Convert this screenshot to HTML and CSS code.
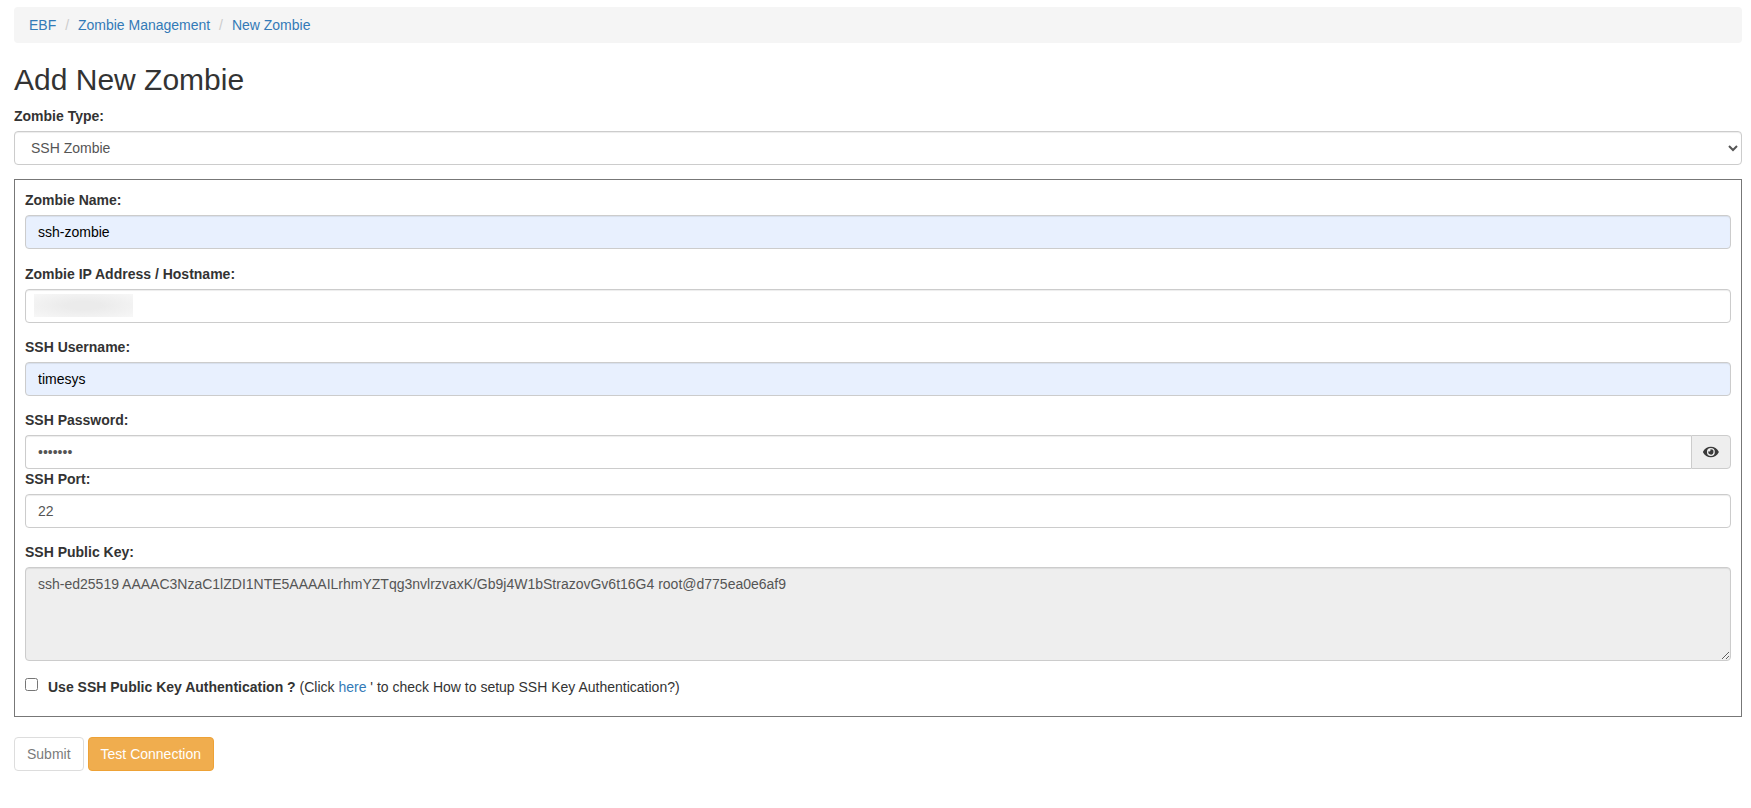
FILE: index.html
```html
<!DOCTYPE html>
<html lang="en">
<head>
<meta charset="utf-8">
<title>Add New Zombie</title>
<link rel="stylesheet" href="styles.css">
</head>
<body>
<div class="page">
  <ol class="breadcrumb">
    <li><a href="#">EBF</a></li>
    <li><a href="#">Zombie Management</a></li>
    <li><a href="#">New Zombie</a></li>
  </ol>
  <h2 class="title">Add New Zombie</h2>
  <form>
    <div class="form-group">
      <label class="field-label">Zombie Type:</label>
      <select class="form-control"><option>SSH Zombie</option></select>
    </div>
    <div class="box">
      <div class="form-group">
        <label class="field-label">Zombie Name:</label>
        <input class="form-control autofilled" type="text" value="ssh-zombie">
      </div>
      <div class="form-group">
        <label class="field-label">Zombie IP Address / Hostname:</label>
        <div class="masked-wrap">
          <input class="form-control" type="text" value="">
          <div class="mask"></div>
        </div>
      </div>
      <div class="form-group">
        <label class="field-label">SSH Username:</label>
        <input class="form-control autofilled" type="text" value="timesys">
      </div>
      <div class="form-group-tight">
        <label class="field-label">SSH Password:</label>
        <div class="input-group">
          <input class="form-control group-input" type="password" value="1234567">
          <span class="addon">
            <svg class="eye" viewBox="0 0 576 512" aria-hidden="true"><path d="M572.52 241.4C518.29 135.59 410.93 64 288 64S57.68 135.64 3.48 241.41a32.35 32.35 0 0 0 0 29.19C57.71 376.41 165.07 448 288 448s230.32-71.64 284.52-177.41a32.35 32.35 0 0 0 0-29.19zM288 400a144 144 0 1 1 144-144 143.93 143.93 0 0 1-144 144zm0-240a95.31 95.31 0 0 0-25.31 3.79 47.85 47.85 0 0 1-66.9 66.9A95.78 95.78 0 1 0 288 160z"/></svg>
          </span>
        </div>
      </div>
      <div class="form-group">
        <label class="field-label">SSH Port:</label>
        <input class="form-control" type="text" value="22">
      </div>
      <div class="form-group">
        <label class="field-label">SSH Public Key:</label>
        <textarea class="form-control key-area" readonly>ssh-ed25519 AAAAC3NzaC1lZDI1NTE5AAAAILrhmYZTqg3nvlrzvaxK/Gb9j4W1bStrazovGv6t16G4 root@d775ea0e6af9</textarea>
      </div>
      <div class="check-row">
        <input class="check" type="checkbox">
        <span><strong class="check-title">Use SSH Public Key Authentication ?</strong> (Click <a href="#">here</a> ' to check How to setup SSH Key Authentication?)</span>
      </div>
    </div>
    <div class="actions">
      <button class="btn btn-default" type="button" disabled>Submit</button>
      <button class="btn btn-warning" type="button">Test Connection</button>
    </div>
  </form>
</div>
</body>
</html>
```
FILE: styles.css
```css
* { box-sizing: border-box; }
html, body { margin: 0; padding: 0; background: #fff; }
body {
  font-family: "Liberation Sans", Arial, sans-serif;
  font-size: 14px;
  line-height: 20px;
  color: #333;
}
a { color: #337ab7; text-decoration: none; }
.page { padding: 7px 9px 0 14px; }
.breadcrumb {
  list-style: none;
  margin: 0 0 20px;
  padding: 8px 15px;
  background: #f5f5f5;
  border-radius: 4px;
}
.breadcrumb li { display: inline-block; }
.breadcrumb li + li::before {
  content: "/\00a0";
  padding: 0 5px;
  color: #ccc;
}
.title {
  margin: 0 0 10px;
  font-size: 30px;
  font-weight: 500;
  line-height: 33px;
}
.form-group { margin-bottom: 14.33px; }
.form-group-tight { margin-bottom: -0.67px; }
.field-label {
  display: block;
  margin-bottom: 5px;
  font-weight: 700;
  line-height: 20px;
}
.form-control {
  display: block;
  width: 100%;
  height: 34px;
  padding: 6px 12px;
  font-family: inherit;
  font-size: 14px;
  line-height: 20px;
  color: #555;
  background: #fff;
  border: 1px solid #ccc;
  border-radius: 4px;
  box-shadow: inset 0 1px 1px rgba(0,0,0,.075);
}
.autofilled { background: #e8f0fe; color: #000; }
.box {
  border: 1px solid #777;
  padding: 10px 10px 0;
  height: 537.5px;
}
.masked-wrap { position: relative; }
.mask {
  position: absolute;
  left: 9px;
  top: 5.5px;
  width: 99px;
  height: 23px;
  background: radial-gradient(ellipse at center, #ebebeb 25%, #f7f7f7 100%);
}
.input-group { display: flex; }
.group-input {
  flex: 1;
  border-right: 0;
  border-radius: 4px 0 0 4px;
}
.addon {
  display: flex;
  align-items: center;
  justify-content: center;
  width: 40px;
  height: 34px;
  background: #eee;
  border: 1px solid #ccc;
  border-radius: 0 4px 4px 0;
}
.eye { width: 15.75px; height: 14px; fill: #3a3a3a; }
.key-area {
  height: 94px;
  background: #eee;
  resize: vertical;
}
.check-row {
  display: flex;
  align-items: flex-start;
  gap: 10px;
  padding-top: 2px;
}
.check { margin: 1px 0 0; width: 13px; height: 13px; flex: none; }
.check-title { font-weight: 700; }
.actions { display: flex; gap: 4px; margin-top: 20px; }
.btn {
  height: 34px;
  padding: 6px 12px;
  font-family: inherit;
  font-size: 14px;
  line-height: 20px;
  border: 1px solid transparent;
  border-radius: 4px;
}
.btn-default { background: #fff; border-color: #ccc; color: #333; opacity: .65; }
.btn-warning { background: #f0ad4e; border-color: #eea236; color: #fff; }
```
